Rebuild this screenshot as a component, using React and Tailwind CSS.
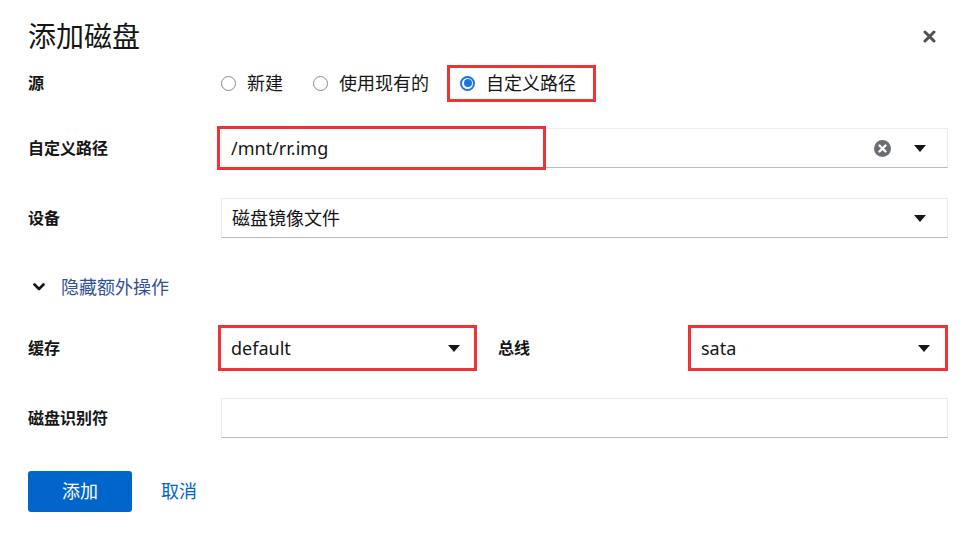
import React from "react";

const font = { fontFamily: '"Noto Sans", "Noto Sans CJK SC", sans-serif' };

function Caret() {
  return (
    <svg width="12" height="7" viewBox="0 0 12 7" className="shrink-0">
      <path d="M0 0 L12 0 L6 7 Z" fill="#151515" />
    </svg>
  );
}

function ClearIcon() {
  return (
    <svg width="17" height="17" viewBox="0 0 17 17" className="shrink-0">
      <circle cx="8.5" cy="8.5" r="8.5" fill="#6a6e73" />
      <path d="M5.5 5.5 L11.5 11.5 M11.5 5.5 L5.5 11.5" stroke="#fff" strokeWidth="2.4" strokeLinecap="round" />
    </svg>
  );
}

function Radio({ checked }) {
  if (checked) {
    return (
      <span className="w-[15px] h-[15px] rounded-full bg-[#1a73e8] flex items-center justify-center shrink-0">
        <span className="w-[11px] h-[11px] rounded-full bg-white flex items-center justify-center">
          <span className="w-[8px] h-[8px] rounded-full bg-[#1a73e8]" />
        </span>
      </span>
    );
  }
  return <span className="w-[15px] h-[15px] rounded-full border-[1.5px] border-[#8a8d90] bg-white shrink-0" />;
}

function Label({ children, className = "" }) {
  return <div className={"text-[16px] font-bold text-[#151515] " + className}>{children}</div>;
}

export default function App() {
  return (
    <div className="w-[974px] h-[541px] bg-white overflow-hidden pl-[28px] pr-[26px] text-[#151515]" style={font}>
      {/* Title */}
      <div className="flex items-center justify-between pt-[16px]">
        <div className="text-[28px] leading-[40px] font-normal">添加磁盘</div>
        <svg width="13" height="13" viewBox="0 0 13 13" className="mr-[12px]">
          <path d="M2 2 L11 11 M11 2 L2 11" stroke="#4f5255" strokeWidth="3" strokeLinecap="round" />
        </svg>
      </div>

      {/* 源 */}
      <div className="flex items-center h-[40px] mt-[7px]">
        <Label className="w-[193px]">源</Label>
        <div className="flex items-center text-[18px]">
          <label className="flex items-center gap-[11px]">
            <Radio />
            <span>新建</span>
          </label>
          <label className="flex items-center gap-[11px] ml-[30px]">
            <Radio />
            <span>使用现有的</span>
          </label>
          <label className="flex items-center gap-[11px] ml-[18px] h-[37px] border-[3px] border-[#ee3236] pl-[10px] pr-[17px]">
            <Radio checked />
            <span>自定义路径</span>
          </label>
        </div>
      </div>

      {/* 自定义路径 */}
      <div className="flex items-center mt-[25px]">
        <Label className="w-[193px]">自定义路径</Label>
        <div className="relative flex-1 h-[40px] flex items-center border border-[#ededed] border-b-[#b8bbbe] pl-[9px] pr-[21px] text-[18px]">
          <span className="flex-1">/mnt/rr.img</span>
          <ClearIcon />
          <span className="ml-[23px]"><Caret /></span>
          <div className="absolute left-[-5px] top-[-3px] w-[329px] h-[44px] border-[3px] border-[#ee3236]" />
        </div>
      </div>

      {/* 设备 */}
      <div className="flex items-center mt-[30px]">
        <Label className="w-[193px]">设备</Label>
        <div className="flex-1 h-[40px] flex items-center border border-[#ededed] border-b-[#b8bbbe] pl-[10px] pr-[21px] text-[18px]">
          <span className="flex-1">磁盘镜像文件</span>
          <Caret />
        </div>
      </div>

      {/* 隐藏额外操作 */}
      <div className="flex items-center h-[30px] mt-[34px] pl-[5px]">
        <svg width="12" height="8" viewBox="0 0 12 8">
          <path d="M1.5 1.5 L6 6 L10.5 1.5" stroke="#151515" strokeWidth="2.6" fill="none" strokeLinecap="round" strokeLinejoin="round" />
        </svg>
        <span className="ml-[16px] text-[18px] text-[#31509a]">隐藏额外操作</span>
      </div>

      {/* 缓存 / 总线 */}
      <div className="flex items-center mt-[26px]">
        <Label className="w-[193px]">缓存</Label>
        <div className="w-[253px] h-[40px] flex items-center outline-[3px] outline-solid outline-[#ee3236] pl-[10px] pr-[14px] text-[18px]">
          <span className="flex-1">default</span>
          <Caret />
        </div>
        <Label className="ml-[24px] w-[193px]">总线</Label>
        <div className="w-[254px] h-[40px] flex items-center outline-[3px] outline-solid outline-[#ee3236] pl-[10px] pr-[15px] text-[18px]">
          <span className="flex-1">sata</span>
          <Caret />
        </div>
      </div>

      {/* 磁盘识别符 */}
      <div className="flex items-center mt-[30px]">
        <Label className="w-[193px]">磁盘识别符</Label>
        <div className="flex-1 h-[40px] border border-[#ededed] border-b-[#b8bbbe]" />
      </div>

      {/* Buttons */}
      <div className="flex items-center mt-[33px]">
        <button className="w-[104px] h-[41px] rounded-[3px] bg-[#0066cc] text-white text-[18px]">添加</button>
        <button className="ml-[29px] text-[18px] text-[#0066cc]">取消</button>
      </div>
    </div>
  );
}
